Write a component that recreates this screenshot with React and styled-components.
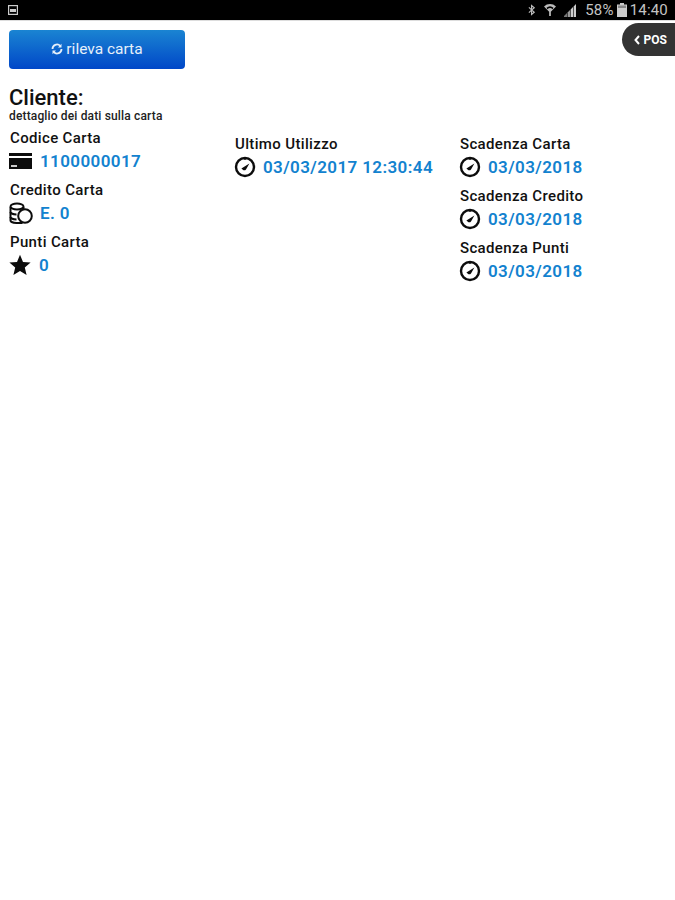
import React from "react";
import styled, { createGlobalStyle } from "styled-components";

const Global = createGlobalStyle`
  html, body { margin: 0; padding: 0; background: #fff; }
  body { font-family: Roboto, "Liberation Sans", sans-serif; }
`;

const Page = styled.div`
  width: 675px;
  height: 900px;
  position: relative;
  overflow: hidden;
  background: #fff;
`;

const StatusBar = styled.div`
  height: 20px;
  background: #000;
  border-bottom: 1px solid #ddd;
  display: flex;
  align-items: center;
  justify-content: space-between;
  padding: 0 7px 0 8px;
  color: #c9c9c9;
  font-size: 15px;
`;

const StatusRight = styled.div`
  display: flex;
  align-items: center;
  gap: 3px;
`;

const StatusIcons = styled.div`
  display: flex;
  align-items: center;
  gap: 8px;
  margin-right: 6px;
`;

const StatusText = styled.span`
  line-height: 20px;
  color: #c4c4c4;
  letter-spacing: 0.2px;
`;

const PosTab = styled.div`
  position: absolute;
  top: 23px;
  right: 0;
  width: 53px;
  height: 33px;
  background: #333;
  border-radius: 17px 0 0 17px;
  color: #fff;
  font-size: 12px;
  font-weight: 700;
  display: flex;
  align-items: center;
  justify-content: flex-end;
  gap: 4px;
  padding-right: 8px;
  box-sizing: border-box;
`;

const Content = styled.div`
  padding: 9px 0 0 9px;
`;

const RefreshButton = styled.button`
  width: 176px;
  height: 39px;
  border: none;
  border-radius: 4px;
  background: linear-gradient(#1a84d2, #0047c8);
  color: #e6f0fa;
  font-family: Roboto, sans-serif;
  font-size: 15.5px;
  display: flex;
  align-items: center;
  justify-content: center;
  gap: 3px;
  padding: 0 0 2px 0;
`;

const Title = styled.h1`
  margin: 17px 0 0;
  font-size: 22px;
  line-height: 24px;
  font-weight: 500;
  color: #111;
`;

const Subtitle = styled.div`
  font-size: 12px;
  line-height: 13px;
  font-weight: 500;
  letter-spacing: 0.15px;
  color: #222;
`;

const Columns = styled.div`
  display: grid;
  grid-template-columns: 225px 225px 216px;
  margin-top: 5px;
  padding-left: 1px;
`;

const Column = styled.div`
  padding-top: ${(p) => p.$top}px;
  display: flex;
  flex-direction: column;
  gap: 7px;
`;

const Field = styled.div`
  display: flex;
  flex-direction: column;
`;

const Label = styled.div`
  font-size: 15px;
  line-height: 21px;
  font-weight: 500;
  letter-spacing: 0.35px;
  color: #111;
`;

const Value = styled.div`
  display: flex;
  align-items: center;
  gap: ${(p) => p.$gap}px;
  height: 24px;
  margin-left: -1px;
  font-size: 17px;
  font-weight: 600;
  letter-spacing: 0.4px;
  color: #1282cf;
`;

const Clock = () => (
  <svg width="22" height="22" viewBox="0 0 22 22" fill="none" stroke="#0c0c0c">
    <circle cx="11" cy="11" r="9" strokeWidth="2.4" />
    <path d="M11 2.5v1.6" strokeWidth="1.4" />
    <path stroke="none" fill="#0c0c0c" d="M7.4 12.6 L15.4 7.6 L12 13.4 A2.4 2.4 0 0 1 8.6 13.4 Z" />
  </svg>
);

const CardIcon = () => (
  <svg width="23" height="16" viewBox="0 0 23 16">
    <path fill="#0c0c0c" d="M0 0h23v3H0zM0 5h23v11H0z" />
    <rect x="2" y="12" width="6" height="2" fill="#ccc" />
  </svg>
);

const CoinsIcon = () => (
  <svg width="24" height="22" viewBox="0 0 24 22" fill="#fff" stroke="#0c0c0c" strokeWidth="2">
    <path d="M1.5 5v13.5c0 1.4 3 2.4 6 2.4h6" />
    <path d="M14.5 5v4" />
    <ellipse cx="8" cy="4.5" rx="6.5" ry="3" />
    <path fill="none" d="M1.5 10c0 1.4 3 2.4 6 2.4M1.5 15c0 1.4 3 2.4 6 2.4" />
    <circle cx="16" cy="14" r="6.8" />
  </svg>
);

const Star = () => (
  <svg width="22" height="22" viewBox="0 0 22 22">
    <path fill="#0c0c0c" d="M11 .8l3 7.2 7.6.6-5.8 5 1.8 7.5L11 17.1l-6.6 4 1.8-7.5-5.8-5L8 8z" />
  </svg>
);

const Refresh = () => (
  <svg width="12" height="12" viewBox="0 0 12 12" fill="none" stroke="#e6f0fa" strokeWidth="1.8">
    <path d="M1.5 6a4.5 4.5 0 0 1 7.7-3.2M10.5 6a4.5 4.5 0 0 1-7.7 3.2" />
    <path fill="#e6f0fa" stroke="none" d="M10.5 0.8v3.6H7zM1.5 11.2V7.6H5z" />
  </svg>
);

const Sim = () => (
  <svg width="10" height="10" viewBox="0 0 10 10" fill="none" stroke="#ccc" strokeWidth="1.2">
    <rect x=".6" y=".6" width="8.8" height="8.8" />
    <rect x="2" y="4" width="6" height="3" fill="#ccc" stroke="none" />
  </svg>
);

const Bluetooth = () => (
  <svg width="8" height="12" viewBox="0 0 9 12" fill="none" stroke="#bbb" strokeWidth="1.3">
    <path d="M1 3l6 5.5L4 11V1l3 2.5L1 9" />
  </svg>
);

const Wifi = () => (
  <svg width="12" height="14" viewBox="0 0 14 14">
    <path fill="#bbb" d="M0 3a10 10 0 0 1 14 0L8 9v5H6V9z" />
    <path fill="#000" d="M3 4.5a6 6 0 0 1 8 0L10 6a4.5 4.5 0 0 0-6 0z" />
  </svg>
);

const Signal = () => (
  <svg width="12" height="14" viewBox="0 0 12 14">
    <path fill="#777" d="M0 13l3-3v4H0z" />
    <path fill="#999" d="M3.6 9.4l2.4-2.4v7H3.6z" />
    <path fill="#ccc" d="M6.6 6.4L9 4v10H6.6zM9.6 3.4L12 1v13H9.6z" />
  </svg>
);

const Battery = () => (
  <svg width="10" height="14" viewBox="0 0 10 14">
    <path fill="#ccc" d="M3 0h4v1.5h3V14H0V1.5h3z" />
    <path fill="#888" d="M1 2.5h8V5H1z" />
  </svg>
);

const Chevron = () => (
  <svg width="6" height="10" viewBox="0 0 6 10" fill="none" stroke="#fff" strokeWidth="2">
    <path d="M5 1L1.5 5 5 9" />
  </svg>
);

const left = [
  { label: "Codice Carta", value: "1100000017", icon: <CardIcon />, gap: 8 },
  { label: "Credito Carta", value: "E. 0", icon: <CoinsIcon />, gap: 7 },
  { label: "Punti Carta", value: "0", icon: <Star />, gap: 8 },
];
const middle = [
  { label: "Ultimo Utilizzo", value: "03/03/2017 12:30:44", icon: <Clock />, gap: 7 },
];
const right = [
  { label: "Scadenza Carta", value: "03/03/2018", icon: <Clock />, gap: 7 },
  { label: "Scadenza Credito", value: "03/03/2018", icon: <Clock />, gap: 7 },
  { label: "Scadenza Punti", value: "03/03/2018", icon: <Clock />, gap: 7 },
];

const FieldList = ({ items, top }) => (
  <Column $top={top}>
    {items.map((f) => (
      <Field key={f.label}>
        <Label>{f.label}</Label>
        <Value $gap={f.gap}>
          {f.icon}
          <span>{f.value}</span>
        </Value>
      </Field>
    ))}
  </Column>
);

export default function App() {
  return (
    <Page>
      <Global />
      <StatusBar>
        <Sim />
        <StatusRight>
          <StatusIcons>
            <Bluetooth />
            <Wifi />
            <Signal />
          </StatusIcons>
          <StatusText>58%</StatusText>
          <Battery />
          <StatusText>14:40</StatusText>
        </StatusRight>
      </StatusBar>
      <PosTab>
        <Chevron />
        POS
      </PosTab>
      <Content>
        <RefreshButton>
          <Refresh />
          rileva carta
        </RefreshButton>
        <Title>Cliente:</Title>
        <Subtitle>dettaglio dei dati sulla carta</Subtitle>
        <Columns>
          <FieldList items={left} top={0} />
          <FieldList items={middle} top={6} />
          <FieldList items={right} top={6} />
        </Columns>
      </Content>
    </Page>
  );
}
